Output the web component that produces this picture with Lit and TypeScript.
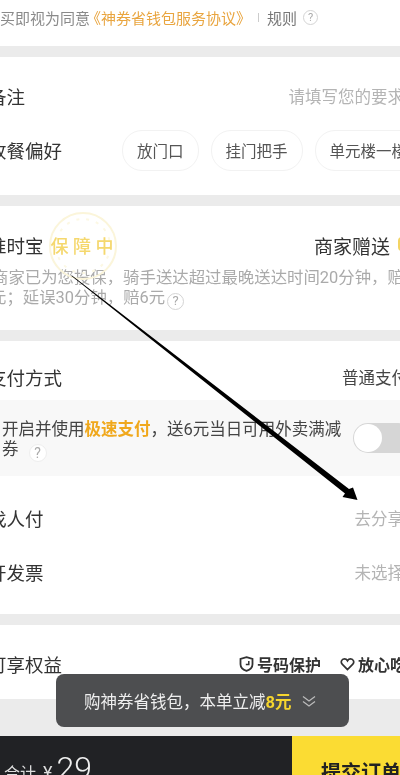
import { LitElement, html, css, svg } from "lit";
import { customElement } from "lit/decorators.js";

@customElement("app-root")
export class AppRoot extends LitElement {
  static styles = css`
    :host {
      display: block;
      position: relative;
      width: 400px;
      height: 775px;
      overflow: hidden;
      background: #ebebeb;
      font-family: Roboto, "Noto Sans CJK SC", sans-serif;
      color: #333;
    }
    .page { width: 440px; margin-left: -12px; display: flex; flex-direction: column; gap: 11px; filter: blur(0.3px); }
    .sec { background: #fff; }
    .agree { height: 46px; display: flex; align-items: center; padding-bottom: 11px; box-sizing: border-box; font-size: 15px; color: #8a8a8a; }
    .agree .lead { margin-left: -3px; }
    .agree .link { color: #e9a53f; margin-left: -4px; }
    .agree .bar { width: 1px; height: 9px; background: #ccc; margin: 0 8px 0 7px; }
    .agree .rule { color: #777; }
    .q { display: inline-flex; align-items: center; justify-content: center; border-radius: 50%; border: 1.5px solid #d4d4d4; color: #aaa; box-sizing: border-box; font-size: 11px; width: 15px; height: 15px; }
    .agree .q { margin-left: 6px; }
    .row { height: 54px; display: flex; align-items: center; justify-content: space-between; font-size: 18.5px; color: #333; }
    .row .label { white-space: nowrap; }
    .val { font-size: 16.5px; color: #b4b4b4; margin-right: 24px; white-space: nowrap; }
    .dark { color: #444; margin-right: 20px; }
    .notes { padding: 12px 0 18px; }
    .chips { display: flex; gap: 12px; margin-left: auto; width: 306px; }
    .chip { height: 39px; padding: 0 14px; display: flex; align-items: center; border: 1px solid #f2f2f2; border-radius: 20px; font-size: 15.5px; color: #555; white-space: nowrap; }
    .ins { height: 124px; padding-top: 19px; box-sizing: border-box; position: relative; }
    .ins-head { display: flex; align-items: center; height: 40px; font-size: 18.5px; }
    .badge { position: relative; margin-left: 7px; font-size: 18px; font-weight: 500; letter-spacing: 4.5px; color: #f5d86e; }
    .badge-text { position: relative; }
    .seal { position: absolute; left: -18px; top: -26px; width: 100px; height: 80px; }
    .gift { margin-left: auto; margin-right: 38px; font-size: 19px; }
    .gift-mark { position: absolute; left: 410px; top: 31px; width: 8px; height: 14px; border-radius: 4px; background: #f3d463; }
    .desc { font-size: 16.4px; line-height: 20px; color: #aaa; white-space: nowrap; margin-left: 4px; margin-top: 3px; }
    .desc .second { margin-left: -2px; }
    .desc .q { width: 17px; height: 17px; font-size: 13px; vertical-align: -2px; margin: -3px 0 -3px 2px; }
    .pay { padding: 12px 0 15px; }
    .pay > .row:first-child { height: 47px; }
    .band { height: 76px; margin-bottom: 15px; background: #f8f8f8; display: flex; align-items: center; padding-left: 14px; }
    .band-text { width: 343px; font-size: 16.5px; line-height: 20px; color: #444; padding-top: 4px; }
    .hl { color: #f0a81c; font-weight: 700; }
    .band .q { width: 18px; height: 18px; font-size: 14px; background: #fff; border-color: #eee; margin: -4px 0 -4px 10px; vertical-align: -3px; }
    .toggle { margin-left: 8px; width: 60px; height: 30px; border-radius: 15px; background: #d6d6d6; position: relative; }
    .toggle::before { content: ""; position: absolute; left: 1px; top: 1px; width: 28px; height: 28px; border-radius: 50%; background: #fff; }
    .perks { height: 74px; padding-top: 12px; box-sizing: border-box; }
    .perk-list { display: flex; gap: 19px; margin-left: auto; margin-right: 22px; font-size: 16px; font-weight: 700; color: #333; white-space: nowrap; }
    .perk { display: flex; align-items: center; gap: 3px; }
    .perk svg { width: 15px; height: 16px; }
    .footer { margin-top: 26px; height: 60px; display: flex; }
    .total { width: 304px; background: #212225; color: #ddd; display: flex; align-items: baseline; padding: 0 0 0 16px; box-sizing: border-box; font-size: 16px; white-space: nowrap; }
    .total .sum { margin-top: 24px; }
    .yen { margin-left: 7px; font-size: 18px; }
    .num { margin-left: 4px; font-size: 32px; line-height: 38px; font-weight: 300; color: #eee; }
    .submit { flex: 1; background: #fbdc33; font-size: 20px; font-weight: 700; color: #222; padding: 21px 0 0 29px; white-space: nowrap; }
    .toast { position: absolute; left: 56px; top: 674px; width: 293px; height: 53px; border-radius: 8px; background: #4d4e50; display: flex; align-items: center; padding-left: 28px; box-sizing: border-box; color: #eee; font-size: 16.5px; white-space: nowrap; filter: blur(0.3px); }
    .toast b { color: #f6d52e; }
    .toast svg { margin-left: 11px; width: 14px; height: 14px; }
    .arrow { position: absolute; inset: 0; width: 400px; height: 775px; pointer-events: none; }
  `;

  render() {
    return html`
      <div class="page">
        <div class="sec agree">
          <span class="lead">购买即视为同意</span><span class="link">《神券省钱包服务协议》</span><span class="bar"></span><span class="rule">规则</span><span class="q">?</span>
        </div>
        <div class="sec notes">
          <div class="row"><span class="label">备注</span><span class="val">请填写您的要求</span></div>
          <div class="row"><span class="label">收餐偏好</span>
            <div class="chips"><span class="chip">放门口</span><span class="chip">挂门把手</span><span class="chip">单元楼一楼</span></div>
          </div>
        </div>
        <div class="sec ins">
          <div class="ins-head">
            <span>准时宝</span>
            <span class="badge">
              <svg class="seal" viewBox="0 0 100 80" fill="none">
                <circle cx="50" cy="40" r="33" stroke="#fbf5da" stroke-width="2"></circle>
                <circle cx="50" cy="40" r="27" stroke="#fcf8e4" stroke-width="2" stroke-dasharray="3 7"></circle>
              </svg>
              <span class="badge-text">保障中</span>
            </span>
            <span class="gift">商家赠送</span>
            <span class="gift-mark"></span>
          </div>
          <div class="desc">商家已为您投保，骑手送达超过最晚送达时间20分钟，赔3元<br /><span class="second">元；延误30分钟，赔6元</span><span class="q">?</span></div>
        </div>
        <div class="sec pay">
          <div class="row"><span class="label">支付方式</span><span class="val dark">普通支付</span></div>
          <div class="band">
            <div class="band-text">开启并使用<span class="hl">极速支付</span>，送6元当日可用外卖满减券<span class="q">?</span></div>
            <div class="toggle"></div>
          </div>
          <div class="row"><span class="label">找人付</span><span class="val">去分享</span></div>
          <div class="row"><span class="label">开发票</span><span class="val">未选择</span></div>
        </div>
        <div class="sec perks">
          <div class="row"><span class="label">可享权益</span>
            <div class="perk-list">
              <span class="perk"><svg viewBox="0 0 15 16" fill="none" stroke="#333" stroke-width="1.8"><path d="M7.500 1.200 13.500 3v5.200c0 3.300-2.600 5.500-6 6.600-3.400-1.100-6-3.300-6-6.600V3z"></path><path d="M9.800 5v3.600H6.800" stroke-width="1.500"></path></svg>号码保护</span>
              <span class="perk"><svg viewBox="0 0 16 16" fill="none" stroke="#333" stroke-width="1.800"><path d="M8 14 2.300 8.200C.4 6.200 1.700 2.500 4.700 2.500 6.200 2.500 7.300 3.300 8 4.500 8.700 3.300 9.800 2.500 11.300 2.500c3 0 4.300 3.700 2.400 5.700z"></path></svg>放心吃</span>
            </div>
          </div>
        </div>
        <div class="footer">
          <div class="total"><span class="sum">合计</span><span class="yen">¥</span><span class="num">29</span></div>
          <div class="submit">提交订单</div>
        </div>
      </div>
      <div class="toast">购神券省钱包，本单立减<b>8元</b>
        <svg viewBox="0 0 14 14" fill="none" stroke="#bbb" stroke-width="1.2"><path d="M1 2.500 7 7 13 2.500"></path><path d="M1 7.500 7 12 13 7.500"></path></svg>
      </div>
      <svg class="arrow" viewBox="0 0 400 775">
        ${svg`<polygon fill="#000" points="72,275.500 349,489 353,487.500 357.500,500 342.500,497 345,493.500 71.500,276"></polygon>`}
      </svg>
    `;
  }
}
